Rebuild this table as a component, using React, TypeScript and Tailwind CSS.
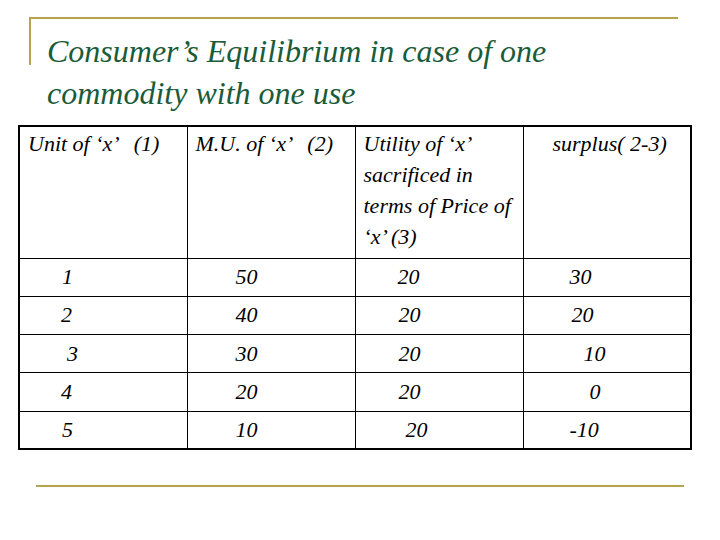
import React from "react";

const serif = { fontFamily: '"Liberation Serif", "DejaVu Serif", serif' };

type Cell = { t: string; c: string };

const rows: Cell[][] = [
  [
    { t: "1", c: "pl-[42px]" },
    { t: "50", c: "pl-[48px]" },
    { t: "20", c: "pl-[42px]" },
    { t: "30", c: "pl-[46px]" },
  ],
  [
    { t: "2", c: "pl-[41px]" },
    { t: "40", c: "pl-[48px]" },
    { t: "20", c: "pl-[43px]" },
    { t: "20", c: "pl-[48px]" },
  ],
  [
    { t: "3", c: "pl-[47px]" },
    { t: "30", c: "pl-[48px]" },
    { t: "20", c: "pl-[43px]" },
    { t: "10", c: "pl-[60px]" },
  ],
  [
    { t: "4", c: "pl-[41px]" },
    { t: "20", c: "pl-[48px]" },
    { t: "20", c: "pl-[43px]" },
    { t: "0", c: "pl-[66px]" },
  ],
  [
    { t: "5", c: "pl-[42px]" },
    { t: "10", c: "pl-[48px]" },
    { t: "20", c: "pl-[50px]" },
    { t: "-10", c: "pl-[46px]" },
  ],
];

export default function App() {
  return (
    <div className="w-[720px] h-[540px] bg-white overflow-hidden" style={serif}>
      {/* Title with olive bracket */}
      <div className="ml-[29px] mt-[17px] w-[649px] border-t-2 border-[#b5a550] flex">
        <div className="w-[2px] h-[46px] bg-[#b5a550] shrink-0" />
        <h1
          className="pl-[16px] pt-[11px] italic text-[32px] leading-[42px] text-[#1a5c3a] font-normal"
          style={serif}
        >
          Consumer’s Equilibrium in case of one
          <br />
          commodity with one use
        </h1>
      </div>

      {/* Table */}
      <table
        className="ml-[18px] mt-[11px] w-[672px] border-collapse border-2 border-black table-fixed italic text-black"
        style={serif}
      >
        <colgroup>
          <col className="w-[168px]" />
          <col className="w-[168px]" />
          <col className="w-[168px]" />
          <col className="w-[168px]" />
        </colgroup>
        <thead>
          <tr className="h-[132px] align-top text-[22px] leading-[31px]">
            <th className="border border-black font-normal text-left pl-[8px] pt-[1px] whitespace-pre align-top">
              Unit of ‘x’   (1)
            </th>
            <th className="border border-black font-normal text-left pl-[8px] pt-[1px] whitespace-pre align-top">
              M.U. of ‘x’   (2)
            </th>
            <th className="border border-black font-normal text-left pl-[8px] pr-[4px] pt-[1px] align-top">
              Utility of ‘x’
              <br />
              sacrificed in
              <br />
              terms of Price of
              <br />
              ‘x’ (3)
            </th>
            <th className="border border-black font-normal text-left pl-[29px] pt-[1px] whitespace-pre align-top">
              surplus( 2-3)
            </th>
          </tr>
        </thead>
        <tbody>
          {rows.map((r, i) => (
            <tr key={i} className="h-[38.3px] text-[22px] leading-[24px]">
              {r.map((cell, j) => (
                <td key={j} className={`border border-black align-middle ${cell.c}`}>
                  {cell.t}
                </td>
              ))}
            </tr>
          ))}
        </tbody>
      </table>

      {/* Bottom olive rule */}
      <div className="ml-[36px] mt-[35px] w-[648px] h-[2px] bg-[#b5a550]" />
    </div>
  );
}
